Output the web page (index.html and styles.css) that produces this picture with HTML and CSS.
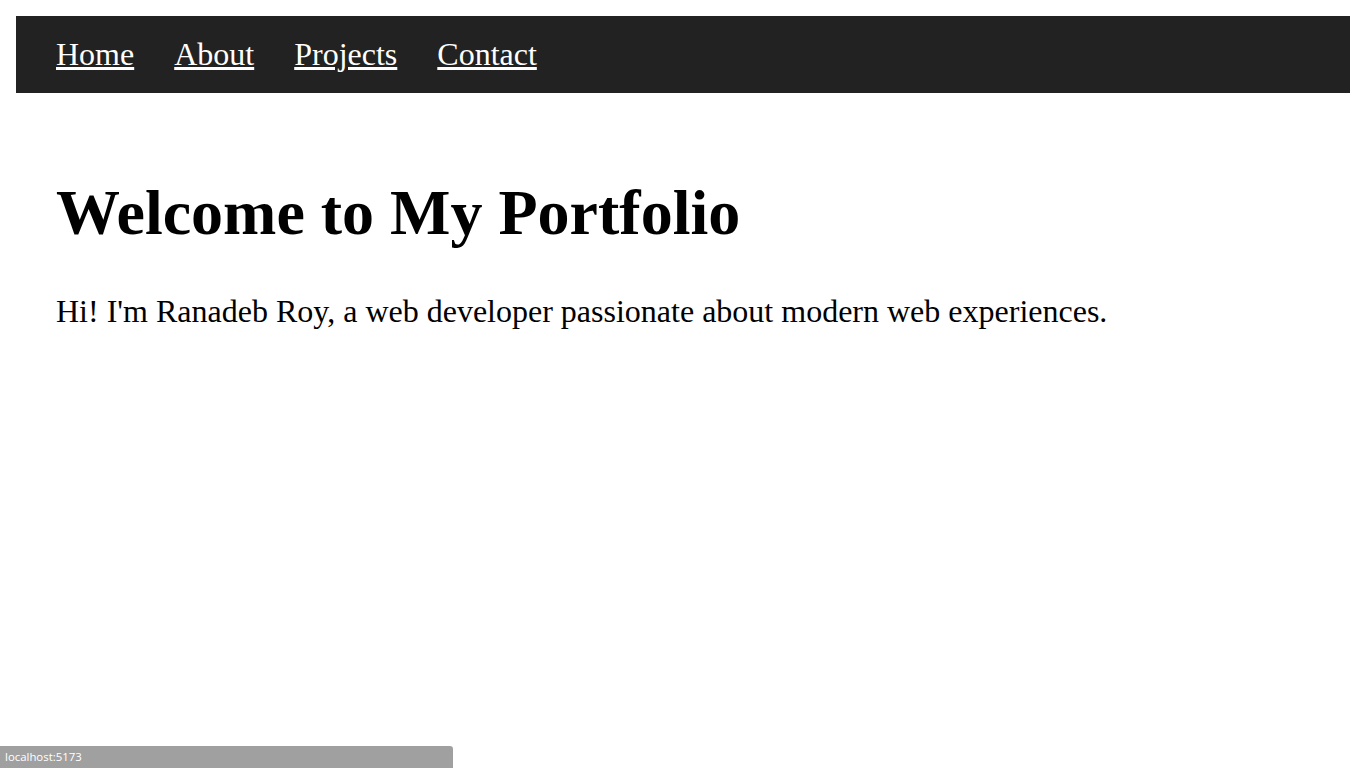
FILE: index.html
```html
<!DOCTYPE html>
<html lang="en">
<head>
<meta charset="utf-8">
<title>Portfolio</title>
<link rel="stylesheet" href="styles.css">
</head>
<body>
<nav class="navbar">
  <a href="#" class="nav-link">Home</a>
  <a href="#" class="nav-link">About</a>
  <a href="#" class="nav-link">Projects</a>
  <a href="#" class="nav-link">Contact</a>
</nav>
<section class="hero">
  <h1 class="hero-title">Welcome to My Portfolio</h1>
  <p class="hero-text">Hi! I'm Ranadeb Roy, a web developer passionate about modern web experiences.</p>
</section>
<div class="status-bubble">localhost:5173</div>
</body>
</html>
```

FILE: styles.css
```css
html, body {
  background: #ffffff;
}
body {
  margin: 16px;
  font-family: "Liberation Serif", "Times New Roman", serif;
  color: #000;
}
.navbar {
  display: flex;
  gap: 40px;
  background: #222222;
  padding: 20px 40px;
}
.nav-link {
  color: #ffffff;
  font-size: 32px;
  text-decoration: underline;
}
.hero {
  padding: 40px;
}
.hero-title {
  font-size: 64px;
  font-weight: bold;
  margin: 42.88px 0;
}
.hero-text {
  font-size: 32px;
  margin: 32px 0;
}
.status-bubble {
  position: fixed;
  left: 0;
  bottom: 0;
  width: 448px;
  height: 22px;
  padding-left: 5px;
  background: #a0a0a0;
  color: #ffffff;
  font-family: "Open Sans", "Noto Sans", sans-serif;
  font-size: 11.4px;
  line-height: 22px;
  border-top-right-radius: 3px;
}
```
